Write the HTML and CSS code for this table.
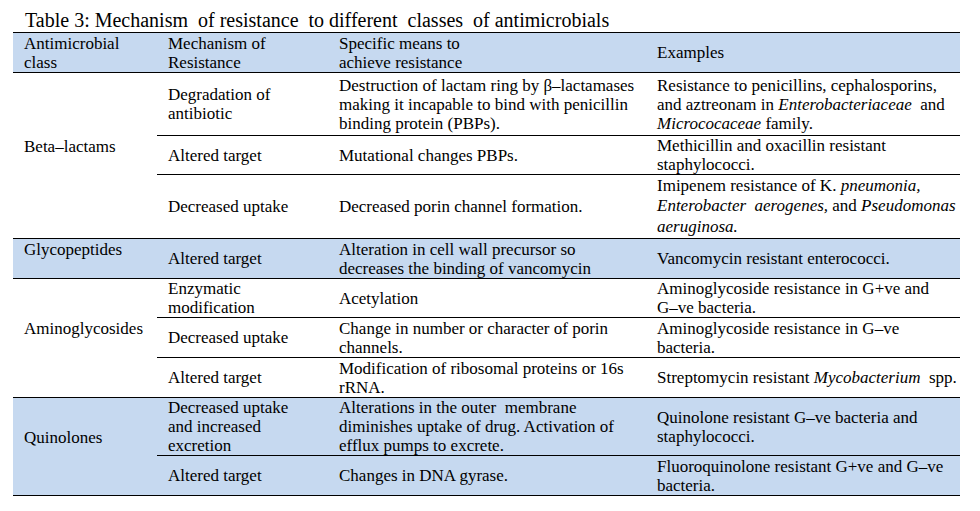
FILE: index.html
```html
<!DOCTYPE html>
<html>
<head>
<meta charset="utf-8">
<link rel="stylesheet" href="styles.css">
</head>
<body>
<div class="page">
  <div class="title">Table 3: Mechanism&nbsp; of resistance&nbsp; to different&nbsp; classes&nbsp; of antimicrobials</div>
  <table class="tbl">
    <colgroup>
      <col class="c1"><col class="c2"><col class="c3"><col class="c4">
    </colgroup>
    <tr class="head r40">
      <td>Antimicrobial<br>class</td>
      <td>Mechanism of<br>Resistance</td>
      <td>Specific means to<br>achieve resistance</td>
      <td>Examples</td>
    </tr>
    <tr class="r63">
      <td class="cls" rowspan="3">Beta–lactams</td>
      <td>Degradation of<br>antibiotic</td>
      <td>Destruction of lactam ring by β–lactamases<br>making it incapable to bind with penicillin<br>binding protein (PBPs).</td>
      <td>Resistance to penicillins, cephalosporins,<br>and aztreonam in <i>Enterobacteriaceae</i>&nbsp; and<br><i>Micrococaceae</i> family.</td>
    </tr>
    <tr class="r39">
      <td>Altered target</td>
      <td>Mutational changes PBPs.</td>
      <td>Methicillin and oxacillin resistant<br>staphylococci.</td>
    </tr>
    <tr class="r64">
      <td>Decreased uptake</td>
      <td>Decreased porin channel formation.</td>
      <td class="loose">Imipenem resistance of K. <i>pneumonia,</i><br><i>Enterobacter&nbsp; aerogenes,</i> and <i>Pseudomonas</i><br><i>aeruginosa.</i></td>
    </tr>
    <tr class="blue r40">
      <td class="cls">Glycopeptides</td>
      <td>Altered target</td>
      <td>Alteration in cell wall precursor so<br>decreases the binding of vancomycin</td>
      <td>Vancomycin resistant enterococci.</td>
    </tr>
    <tr class="r39">
      <td class="cls" rowspan="3">Aminoglycosides</td>
      <td>Enzymatic<br>modification</td>
      <td>Acetylation</td>
      <td>Aminoglycoside resistance in G+ve and<br>G–ve bacteria.</td>
    </tr>
    <tr class="r40">
      <td>Decreased uptake</td>
      <td>Change in number or character of porin<br>channels.</td>
      <td>Aminoglycoside resistance in G–ve<br>bacteria.</td>
    </tr>
    <tr class="r40">
      <td>Altered target</td>
      <td>Modification of ribosomal proteins or 16s<br>rRNA.</td>
      <td>Streptomycin resistant <i>Mycobacterium</i>&nbsp; spp.</td>
    </tr>
    <tr class="blue r58">
      <td class="cls" rowspan="2">Quinolones</td>
      <td>Decreased uptake<br>and increased<br>excretion</td>
      <td>Alterations in the outer&nbsp; membrane<br>diminishes uptake of drug. Activation of<br>efflux pumps to excrete.</td>
      <td>Quinolone resistant G–ve bacteria and<br>staphylococci.</td>
    </tr>
    <tr class="blue r40">
      <td>Altered target</td>
      <td>Changes in DNA gyrase.</td>
      <td>Fluoroquinolone resistant G+ve and G–ve<br>bacteria.</td>
    </tr>
  </table>
</div>
</body>
</html>
```
FILE: styles.css
```css
html, body {
  margin: 0;
  padding: 0;
  background: #ffffff;
}

.page {
  padding: 9px 0 0 13px;
  font-family: "Liberation Serif", "Times New Roman", serif;
  color: #000000;
}

.title {
  font-family: "Liberation Serif", "Times New Roman", serif;
  font-size: 20px;
  line-height: 23px;
  padding-left: 12px;
  white-space: nowrap;
}

.tbl {
  border-collapse: separate;
  border-spacing: 0;
  table-layout: fixed;
  width: 947px;
  border-top: 1px solid #000000;
  font-family: "Liberation Serif", "Times New Roman", serif;
  font-size: 17px;
  line-height: 19px;
}

.c1 { width: 144px; }
.c2 { width: 171px; }
.c3 { width: 318px; }
.c4 { width: 314px; }

.tbl td {
  font-family: "Liberation Serif", "Times New Roman", serif;
  font-size: 17px;
  color: #000000;
  padding: 0 11px;
  vertical-align: middle;
  border-bottom: 1px solid #000000;
  white-space: nowrap;
}

.tbl td i {
  font-family: "Liberation Serif", "Times New Roman", serif;
  font-style: italic;
}

.tbl td.cls {
  padding-bottom: 19px;
}

.tbl td.loose {
  line-height: 20.5px;
}

.head td,
.blue td {
  background: #c6d9f0;
}

.r39 { height: 39px; }
.r40 { height: 40px; }
.r58 { height: 58px; }
.r63 { height: 63px; }
.r64 { height: 64px; }
```
